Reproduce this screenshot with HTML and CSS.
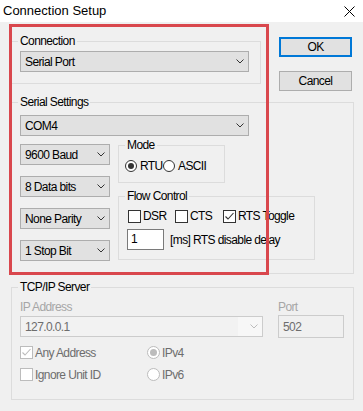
FILE: index.html
```html
<!DOCTYPE html>
<html lang="en">
<head>
    <meta charset="UTF-8">
    <meta name="viewport" content="width=device-width, initial-scale=1.0">
    <title>Connection Setup</title>
    <link rel="stylesheet" href="styles.css">
</head>
<body>
    <div class="window">
        <div class="titlebar">
            <span class="title">Connection Setup</span>
            <svg class="close" width="11" height="11" viewBox="0 0 11 11"><path d="M0.5 0.5L10.5 10.5M10.5 0.5L0.5 10.5" stroke="#000" stroke-width="1" fill="none"/></svg>
        </div>

        <div class="dialog">
            <div class="top-row">
                <fieldset class="group group-connection">
                    <legend>Connection</legend>
                    <div class="combo combo-wide">
                        <span>Serial Port</span>
                        <svg class="chev" width="8" height="5" viewBox="0 0 8 5"><polyline points="0.5,0.5 4,4 7.5,0.5" stroke="#333" fill="none"/></svg>
                    </div>
                </fieldset>
                <div class="buttons">
                    <button class="btn btn-default">OK</button>
                    <button class="btn">Cancel</button>
                </div>
            </div>

            <fieldset class="group group-serial">
                <legend>Serial Settings</legend>
                <div class="combo combo-wide">
                    <span>COM4</span>
                    <svg class="chev" width="8" height="5" viewBox="0 0 8 5"><polyline points="0.5,0.5 4,4 7.5,0.5" stroke="#333" fill="none"/></svg>
                </div>
                <div class="serial-body">
                    <div class="serial-left">
                        <div class="combo combo-small">
                            <span>9600 Baud</span>
                            <svg class="chev" width="8" height="5" viewBox="0 0 8 5"><polyline points="0.5,0.5 4,4 7.5,0.5" stroke="#333" fill="none"/></svg>
                        </div>
                        <div class="combo combo-small">
                            <span>8 Data bits</span>
                            <svg class="chev" width="8" height="5" viewBox="0 0 8 5"><polyline points="0.5,0.5 4,4 7.5,0.5" stroke="#333" fill="none"/></svg>
                        </div>
                        <div class="combo combo-small">
                            <span>None Parity</span>
                            <svg class="chev" width="8" height="5" viewBox="0 0 8 5"><polyline points="0.5,0.5 4,4 7.5,0.5" stroke="#333" fill="none"/></svg>
                        </div>
                        <div class="combo combo-small">
                            <span>1 Stop Bit</span>
                            <svg class="chev" width="8" height="5" viewBox="0 0 8 5"><polyline points="0.5,0.5 4,4 7.5,0.5" stroke="#333" fill="none"/></svg>
                        </div>
                    </div>

                    <div class="serial-right">
                        <fieldset class="group group-mode">
                            <legend>Mode</legend>
                            <div class="mode-row">
                                <label class="option opt-rtu"><span class="radio checked"></span>RTU</label>
                                <label class="option"><span class="radio"></span>ASCII</label>
                            </div>
                        </fieldset>

                        <fieldset class="group group-flow">
                            <legend>Flow Control</legend>
                            <div class="flow-row">
                                <label class="option"><span class="checkbox"></span>DSR</label>
                                <label class="option"><span class="checkbox"></span>CTS</label>
                                <label class="option">
                                    <span class="checkbox"><svg width="11" height="11" viewBox="0 0 11 11"><polyline points="1.5,5.5 4,8 9.5,2" stroke="#333" stroke-width="1.1" fill="none"/></svg></span>RTS Toggle
                                </label>
                            </div>
                            <div class="delay-row">
                                <div class="textbox">1</div>
                                <span>[ms] RTS disable delay</span>
                            </div>
                        </fieldset>
                    </div>
                </div>
            </fieldset>

            <fieldset class="group group-tcp">
                <legend>TCP/IP Server</legend>
                <div class="tcp-fields">
                    <div class="field-ip">
                        <div class="dim-label">IP Address</div>
                        <div class="combo combo-disabled">
                            <span class="edit">127.0.0.1</span>
                            <svg class="chev" width="8" height="5" viewBox="0 0 8 5"><polyline points="0.5,0.5 4,4 7.5,0.5" stroke="#bcbcbc" fill="none"/></svg>
                        </div>
                    </div>
                    <div class="field-port">
                        <div class="dim-label">Port</div>
                        <div class="port-box">502</div>
                    </div>
                </div>
                <div class="tcp-options">
                    <label class="option disabled">
                        <span class="checkbox"><svg width="11" height="11" viewBox="0 0 11 11"><polyline points="1.5,5.5 4,8 9.5,2" stroke="#bcbcbc" stroke-width="1.1" fill="none"/></svg></span>Any Address
                    </label>
                    <label class="option disabled"><span class="radio checked"></span>IPv4</label>
                    <label class="option disabled"><span class="checkbox"></span>Ignore Unit ID</label>
                    <label class="option disabled"><span class="radio"></span>IPv6</label>
                </div>
            </fieldset>
        </div>

        <div class="highlight"></div>
    </div>
</body>
</html>
```

FILE: styles.css
```css
* {
    box-sizing: border-box;
}

body {
    margin: 0;
    font-family: "Liberation Sans", Arial, sans-serif;
    font-size: 12px;
    letter-spacing: -0.6px;
    line-height: 14px;
    color: #000;
    background: #f0f0f0;
}

.window {
    position: relative;
    width: 363px;
    height: 411px;
    background: #f0f0f0;
    overflow: hidden;
}

.titlebar {
    height: 22px;
    background: #fff;
    display: flex;
    align-items: center;
    justify-content: space-between;
    padding: 0 8px 0 3px;
}
.title {
    font-size: 13px;
    letter-spacing: 0;
    line-height: 16px;
}
.close {
    display: block;
}

.dialog {
    padding: 0 9px 0 11px;
}

/* group boxes */
.group {
    margin: 0;
    min-width: 0;
    padding: 0 8px;
    border: 1px solid #dcdcdc;
}
.group legend {
    padding: 0 2px;
    margin-left: -2px;
    line-height: 14px;
}

.top-row {
    display: flex;
    align-items: flex-start;
}
.group-connection {
    width: 250px;
    margin-top: 12px;
    padding: 3px 8px 11px;
}
.buttons {
    display: flex;
    flex-direction: column;
    gap: 14px;
    margin: 15px 0 0 18px;
}
.btn {
    width: 73px;
    height: 20px;
    padding: 0;
    font: inherit;
    letter-spacing: inherit;
    color: #000;
    background: #e1e1e1;
    border: 1px solid #adadad;
}
.btn-default {
    border-color: #0078d7;
    box-shadow: inset 0 0 0 1px #0078d7;
}

/* combo boxes */
.combo {
    display: flex;
    align-items: center;
    justify-content: space-between;
    height: 21px;
    padding: 0 4px 0 4px;
    background: #e1e1e1;
    border: 1px solid #adadad;
}
.chev {
    display: block;
    flex-shrink: 0;
}
.combo-wide {
    width: 229px;
}
.combo-small {
    width: 90px;
}
.combo-disabled {
    width: 243px;
    padding: 0 4px 0 0;
    background: #f7f7f7;
    border-color: #cccccc;
    color: #6d6d6d;
}
.combo-disabled .edit {
    flex: 1;
    height: 100%;
    padding: 3px 0 0 4px;
    margin-right: 12px;
    background: #f2f2f2;
}

.group-serial {
    width: 343px;
    margin-top: 4px;
    padding: 6px 8px 12px;
}
.serial-body {
    display: flex;
    align-items: flex-start;
}
.serial-left {
    display: flex;
    flex-direction: column;
    gap: 11px;
    margin-top: 8px;
}
.serial-right {
    margin: 2px 0 0 8px;
}

/* options */
.option {
    display: flex;
    align-items: center;
    white-space: nowrap;
}
.radio {
    width: 13px;
    height: 13px;
    margin-right: 2px;
    border: 1px solid #333;
    border-radius: 50%;
    background: #fff;
    display: flex;
    align-items: center;
    justify-content: center;
}
.radio.checked::after {
    content: "";
    width: 7px;
    height: 7px;
    border-radius: 50%;
    background: #333;
}
.checkbox {
    width: 13px;
    height: 13px;
    margin-right: 2px;
    border: 1px solid #333;
    background: #fff;
}
.checkbox svg {
    display: block;
}

.group-mode {
    width: 107px;
    padding: 7px 6px 9px;
}
.group-mode legend {
    margin-left: 0;
}
.mode-row {
    display: flex;
    align-items: center;
    height: 14px;
}
.mode-row .radio {
    width: 12px;
    height: 12px;
    margin-right: 3px;
}
.mode-row .radio.checked::after {
    width: 6px;
    height: 6px;
}
.opt-rtu {
    width: 38px;
}

.group-flow {
    width: 197px;
    margin-top: 6px;
    padding: 6px 8px 9px;
}
.flow-row {
    display: grid;
    grid-template-columns: 47px 48px auto;
    height: 13px;
    margin-left: 1px;
}
.delay-row {
    display: flex;
    align-items: center;
    gap: 6px;
    margin-top: 7px;
}
.textbox {
    width: 37px;
    height: 21px;
    padding: 2px 0 0 3px;
    background: #fff;
    border: 1px solid #7a7a7a;
}

.group-tcp {
    width: 343px;
    margin-top: 6px;
    padding: 6px 8px 18px;
}
.tcp-fields {
    display: flex;
    gap: 15px;
}
.dim-label {
    color: #a6a6a6;
}
.field-ip .combo {
    margin-top: 2px;
}
.port-box {
    width: 66px;
    height: 23px;
    margin-top: 1px;
    padding: 4px 0 0 4px;
    color: #6d6d6d;
    background: #f0f0f0;
    border: 1px solid #cccccc;
}
.tcp-options {
    display: grid;
    grid-template-columns: 127px auto;
    row-gap: 9px;
    margin-top: 8px;
}
.tcp-options .option {
    height: 13px;
}
.option.disabled {
    color: #6d6d6d;
}
.option.disabled .checkbox,
.option.disabled .radio {
    border-color: #bcbcbc;
}
.option.disabled .radio.checked::after {
    background: #bcbcbc;
}

/* red highlight drawn over the serial part */
.highlight {
    position: absolute;
    left: 9px;
    top: 24px;
    width: 260px;
    height: 251px;
    border: 3px solid #d9474d;
}
```
